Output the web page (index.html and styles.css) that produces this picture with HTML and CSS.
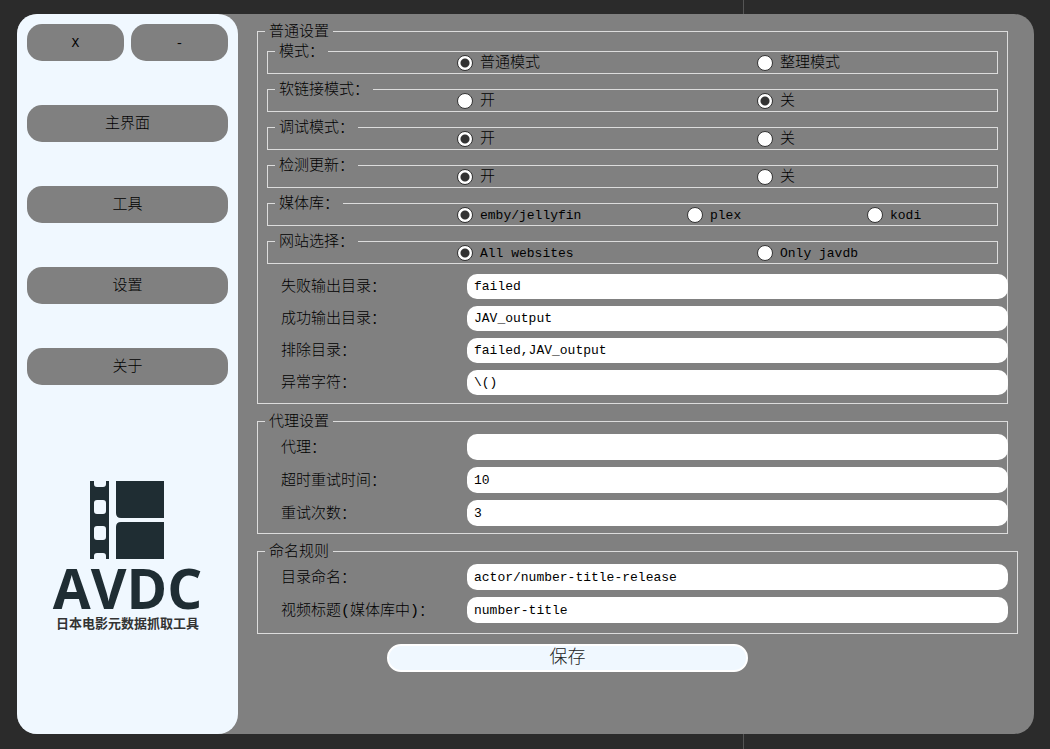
FILE: index.html
```html
<!DOCTYPE html>
<html lang="zh-CN">
<head>
<meta charset="utf-8">
<meta name="viewport" content="width=device-width, initial-scale=1">
<title>AVDC</title>
<link rel="stylesheet" href="styles.css">
</head>
<body>
<div class="window">
  <aside class="sidebar">
    <div class="window-buttons">
      <button type="button" class="nav-button">X</button>
      <button type="button" class="nav-button">-</button>
    </div>
    <nav class="nav">
      <button type="button" class="nav-button">主界面</button>
      <button type="button" class="nav-button">工具</button>
      <button type="button" class="nav-button">设置</button>
      <button type="button" class="nav-button">关于</button>
    </nav>
    <div class="logo">
      <svg class="logo-film" viewBox="0 0 76 80" aria-hidden="true">
        <path fill="#1f2d33" fill-rule="evenodd" d="M0 1H4V4Q4 7 7 7H13Q16 7 16 4V1H19V79H16V76Q16 73 13 73H7Q4 73 4 76V79H0ZM7 20Q4 20 4 23V31Q4 34 7 34H13Q16 34 16 31V23Q16 20 13 20ZM7 46Q4 46 4 49V57Q4 60 7 60H13Q16 60 16 57V49Q16 46 13 46Z"/>
        <path fill="#1f2d33" d="M26 1H74V38H31Q26 38 26 33ZM31 42H74V79H26V47Q26 42 31 42Z"/>
      </svg>
      <div class="logo-name">AVDC</div>
      <div class="logo-caption">日本电影元数据抓取工具</div>
    </div>
  </aside>
  <main class="settings">
    <form class="form">
      <fieldset class="group group-narrow">
        <legend>普通设置</legend>
        <div class="choices">
          <fieldset class="choice">
            <legend>模式：</legend>
            <div class="options">
              <label class="option"><input type="radio" name="mode" checked>普通模式</label>
              <label class="option"><input type="radio" name="mode">整理模式</label>
            </div>
          </fieldset>
          <fieldset class="choice">
            <legend>软链接模式：</legend>
            <div class="options">
              <label class="option"><input type="radio" name="link">开</label>
              <label class="option"><input type="radio" name="link" checked>关</label>
            </div>
          </fieldset>
          <fieldset class="choice">
            <legend>调试模式：</legend>
            <div class="options">
              <label class="option"><input type="radio" name="debug" checked>开</label>
              <label class="option"><input type="radio" name="debug">关</label>
            </div>
          </fieldset>
          <fieldset class="choice">
            <legend>检测更新：</legend>
            <div class="options">
              <label class="option"><input type="radio" name="update" checked>开</label>
              <label class="option"><input type="radio" name="update">关</label>
            </div>
          </fieldset>
          <fieldset class="choice">
            <legend>媒体库：</legend>
            <div class="options options-three">
              <label class="option"><input type="radio" name="library" checked>emby/jellyfin</label>
              <label class="option"><input type="radio" name="library">plex</label>
              <label class="option"><input type="radio" name="library">kodi</label>
            </div>
          </fieldset>
          <fieldset class="choice">
            <legend>网站选择：</legend>
            <div class="options">
              <label class="option"><input type="radio" name="site" checked>All websites</label>
              <label class="option"><input type="radio" name="site">Only javdb</label>
            </div>
          </fieldset>
        </div>
        <div class="fields fields-compact">
          <label for="failed">失败输出目录：</label><input type="text" id="failed" value="failed">
          <label for="success">成功输出目录：</label><input type="text" id="success" value="JAV_output">
          <label for="exclude">排除目录：</label><input type="text" id="exclude" value="failed,JAV_output">
          <label for="chars">异常字符：</label><input type="text" id="chars" value="\()">
        </div>
      </fieldset>
      <fieldset class="group group-narrow">
        <legend>代理设置</legend>
        <div class="fields">
          <label for="proxy">代理：</label><input type="text" id="proxy" value="">
          <label for="timeout">超时重试时间：</label><input type="text" id="timeout" value="10">
          <label for="retry">重试次数：</label><input type="text" id="retry" value="3">
        </div>
      </fieldset>
      <fieldset class="group group-wide">
        <legend>命名规则</legend>
        <div class="fields">
          <label for="folder">目录命名：</label><input type="text" id="folder" value="actor/number-title-release">
          <label for="title">视频标题(媒体库中)：</label><input type="text" id="title" value="number-title">
        </div>
      </fieldset>
      <button type="button" class="save">保存</button>
    </form>
  </main>
</div>
</body>
</html>
```
FILE: styles.css
```css
* {
  box-sizing: border-box;
}

body {
  margin: 0;
  min-height: 100vh;
  padding: 14px 16px 15px 17px;
  display: flex;
  background: linear-gradient(#555, #555) 743px 0 / 1px 100% no-repeat #2b2b2b;
  color: #000;
}

body,
button,
input {
  font-family: "Liberation Mono", "Noto Sans CJK SC", monospace;
  font-size: 15px;
  font-weight: 300;
  line-height: 17px;
}

.window {
  flex: 1;
  display: flex;
  background: #808080;
  border-radius: 20px;
}

.sidebar {
  width: 221px;
  flex: none;
  padding: 10px;
  background: #f0f8ff;
  border-radius: 20px;
}

.window-buttons {
  display: grid;
  grid-template-columns: 1fr 1fr;
  gap: 7px;
}

.nav {
  display: grid;
  gap: 44px;
  margin-top: 44px;
}

.nav-button {
  height: 37px;
  padding: 1px 0 0;
  border: 0;
  border-radius: 15px;
  background: #808080;
  color: #000;
}

.window-buttons .nav-button {
  font-size: 13px;
}

.logo {
  display: flex;
  flex-direction: column;
  align-items: center;
  margin-top: 95px;
  color: #1f2d33;
}

.logo-film {
  width: 76px;
  height: 80px;
}

.logo-name {
  font: bold 55px/56px "Open Sans", sans-serif;
}

.logo-caption {
  font: bold 13px/13px "Noto Sans CJK SC", sans-serif;
  color: #333;
}

.settings {
  flex: 1;
  min-width: 0;
  padding: 9px 16px 20px 19px;
}

.form {
  display: flex;
  flex-direction: column;
  gap: 9px;
}

fieldset {
  min-width: 0;
  margin: 0;
  border: 1px solid #dcdcdc;
}

legend {
  padding: 2px 4px 0;
  line-height: 15px;
}

.group {
  padding: 4px 0 8px 7px;
}

.group + .group {
  padding-bottom: 7px;
}

.group-narrow {
  margin-right: 10px;
}

.group + .group-wide {
  padding-right: 9px;
  padding-bottom: 10px;
}

.choices {
  display: grid;
  gap: 7px;
  margin: -1px 9px 10px 2px;
}

.choice {
  padding: 0 0 0 7px;
}

.options {
  display: grid;
  grid-template-columns: 5fr 4fr;
  margin: -5px 0 2px;
  padding-left: 182px;
}

.options-three {
  grid-template-columns: 23fr 18fr 13fr;
}

.option {
  display: flex;
  align-items: flex-start;
  gap: 7px;
  height: 16px;
  line-height: 18px;
}

.options-three .option,
.choice:last-child .option {
  font-size: 13px;
}

input[type="radio"] {
  appearance: none;
  flex: none;
  width: 16px;
  height: 16px;
  margin: 0;
  border: 1px solid #333;
  border-radius: 50%;
  background: #fff;
}

input[type="radio"]:checked {
  background: radial-gradient(circle, #333 4px, #fff 5px);
}

.fields {
  display: grid;
  grid-template-columns: 186px 1fr;
  grid-auto-rows: 26px;
  gap: 7px 0;
  align-items: center;
  padding-left: 16px;
}

.fields label {
  padding-top: 2px;
}

.fields-compact {
  grid-auto-rows: 25px;
}

.group-narrow .fields {
  margin-right: -1px;
}

input[type="text"] {
  width: 100%;
  height: 100%;
  min-width: 0;
  padding: 0 7px;
  border: 0;
  border-radius: 10px;
  background: #fff;
  color: #000;
  font-size: 13px;
}

.save {
  width: 361px;
  max-width: 100%;
  height: 28px;
  margin: 1px 0 0 130px;
  padding: 0;
  border: 2px solid #fff;
  border-radius: 14px;
  background: #f0f8ff;
  color: #222;
  font-size: 18px;
}
```
